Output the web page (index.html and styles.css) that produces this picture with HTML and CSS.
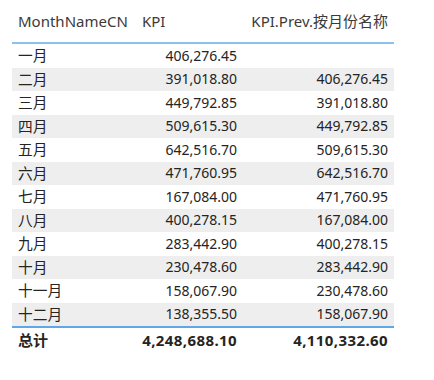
FILE: index.html
```html
<!DOCTYPE html>
<html>
<head>
<meta charset="utf-8">
<link rel="stylesheet" href="styles.css">
</head>
<body>
<div class="table">
  <div class="row head">
    <div class="c1">MonthNameCN</div>
    <div class="c2 left">KPI</div>
    <div class="c3">KPI.Prev.按月份名称</div>
  </div>
  <div class="body">
    <div class="row"><div class="c1 cn">一月</div><div class="c2">406,276.45</div><div class="c3"></div></div>
    <div class="row alt"><div class="c1 cn">二月</div><div class="c2">391,018.80</div><div class="c3">406,276.45</div></div>
    <div class="row"><div class="c1 cn">三月</div><div class="c2">449,792.85</div><div class="c3">391,018.80</div></div>
    <div class="row alt"><div class="c1 cn">四月</div><div class="c2">509,615.30</div><div class="c3">449,792.85</div></div>
    <div class="row"><div class="c1 cn">五月</div><div class="c2">642,516.70</div><div class="c3">509,615.30</div></div>
    <div class="row alt"><div class="c1 cn">六月</div><div class="c2">471,760.95</div><div class="c3">642,516.70</div></div>
    <div class="row"><div class="c1 cn">七月</div><div class="c2">167,084.00</div><div class="c3">471,760.95</div></div>
    <div class="row alt"><div class="c1 cn">八月</div><div class="c2">400,278.15</div><div class="c3">167,084.00</div></div>
    <div class="row"><div class="c1 cn">九月</div><div class="c2">283,442.90</div><div class="c3">400,278.15</div></div>
    <div class="row alt"><div class="c1 cn">十月</div><div class="c2">230,478.60</div><div class="c3">283,442.90</div></div>
    <div class="row"><div class="c1 cn">十一月</div><div class="c2">158,067.90</div><div class="c3">230,478.60</div></div>
    <div class="row alt"><div class="c1 cn">十二月</div><div class="c2">138,355.50</div><div class="c3">158,067.90</div></div>
  </div>
  <div class="row total">
    <div class="c1 cn">总计</div>
    <div class="c2">4,248,688.10</div>
    <div class="c3">4,110,332.60</div>
  </div>
</div>
</body>
</html>
```
FILE: styles.css
```css
html, body {
  margin: 0;
  padding: 0;
  background: #ffffff;
}
body {
  padding: 0 40px 0 12px;
  font-family: "Noto Sans", "Noto Sans CJK SC", sans-serif;
  font-size: 14px;
  color: #252423;
}
.table {
  width: 382px;
}
.row {
  display: grid;
  grid-template-columns: 124px 107px 151px;
  height: 23.5px;
  align-items: center;
  line-height: 1;
}
.row > div {
  padding: 0 6px;
  white-space: nowrap;
}
.cn {
  font-size: 14.7px;
}
.c2, .c3 {
  text-align: right;
}
.c2.left {
  text-align: left;
}
.head {
  height: 42px;
  border-bottom: 2px solid #8ec0ec;
  color: #3b3a39;
  font-size: 15px;
}
.alt {
  background: #eeeeee;
}
.total {
  border-top: 2px solid #5fa8e8;
  height: 24px;
  font-weight: 700;
}
.total .c2, .total .c3 {
  font-size: 15px;
  letter-spacing: 0.4px;
}
.total .c1 {
  font-size: 15px;
}
```
